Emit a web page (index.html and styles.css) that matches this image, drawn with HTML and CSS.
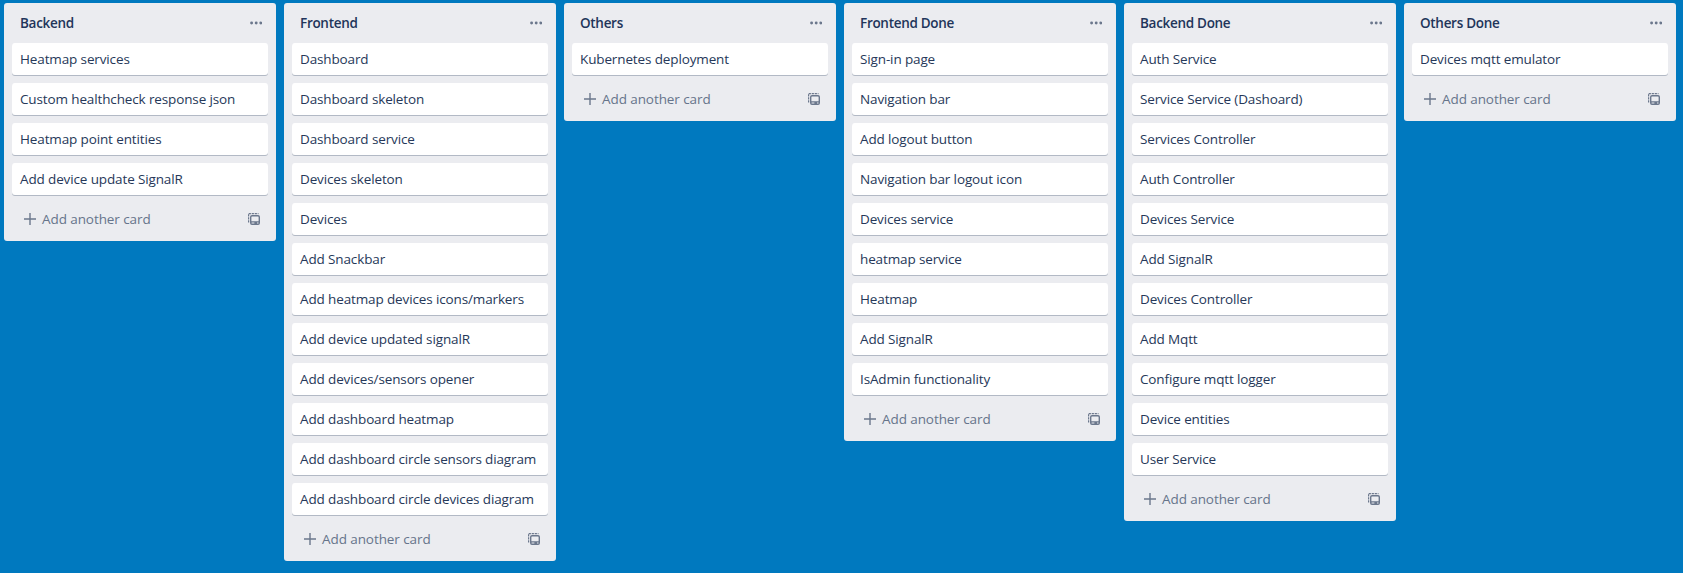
FILE: index.html
```
<!DOCTYPE html>
<html lang="en">
<head>
<meta charset="utf-8">
<title>Board</title>
<link rel="stylesheet" href="styles.css">
</head>
<body>
<svg width="0" height="0" class="defs">
  <symbol id="dots" viewBox="0 0 12 4"><circle cx="1.6" cy="2" r="1.45"/><circle cx="6.2" cy="2" r="1.45"/><circle cx="10.8" cy="2" r="1.45"/></symbol>
  <symbol id="plus" viewBox="0 0 12 12"><path d="M5.3 0h1.4v5.3H12v1.4H6.7V12H5.3V6.7H0V5.3h5.3z"/></symbol>
  <symbol id="template" viewBox="0 0 12 12"><path d="M.6 9.500V.6H10.500" fill="none" stroke="currentColor" stroke-width="1.2" stroke-dasharray="2.200 .8"/><path fill-rule="evenodd" d="M4 2h6a2 2 0 0 1 2 2v6a2 2 0 0 1-2 2H4a2 2 0 0 1-2-2V4a2 2 0 0 1 2-2zM4 3.400a.6.6 0 0 0-.6.6v4.200h7.200V4a.6.600 0 0 0-.6-.6zM3.600 9.600v1h2.800v-1zm5.400 0v1h1.500v-1z"/></symbol>
</svg>
<main class="board">
  <section class="list">
    <header class="list-header"><h2>Backend</h2><svg class="dots"><use href="#dots"/></svg></header>
    <div class="cards">
      <div class="card">Heatmap services</div>
      <div class="card">Custom healthcheck response json</div>
      <div class="card">Heatmap point entities</div>
      <div class="card">Add device update SignalR</div>
    </div>
    <footer class="composer"><svg class="icon"><use href="#plus"/></svg><span>Add another card</span><svg class="icon template"><use href="#template"/></svg></footer>
  </section>
  <section class="list">
    <header class="list-header"><h2>Frontend</h2><svg class="dots"><use href="#dots"/></svg></header>
    <div class="cards">
      <div class="card">Dashboard</div>
      <div class="card">Dashboard skeleton</div>
      <div class="card">Dashboard service</div>
      <div class="card">Devices skeleton</div>
      <div class="card">Devices</div>
      <div class="card">Add Snackbar</div>
      <div class="card">Add heatmap devices icons/markers</div>
      <div class="card">Add device updated signalR</div>
      <div class="card">Add devices/sensors opener</div>
      <div class="card">Add dashboard heatmap</div>
      <div class="card">Add dashboard circle sensors diagram</div>
      <div class="card">Add dashboard circle devices diagram</div>
    </div>
    <footer class="composer"><svg class="icon"><use href="#plus"/></svg><span>Add another card</span><svg class="icon template"><use href="#template"/></svg></footer>
  </section>
  <section class="list">
    <header class="list-header"><h2>Others</h2><svg class="dots"><use href="#dots"/></svg></header>
    <div class="cards">
      <div class="card">Kubernetes deployment</div>
    </div>
    <footer class="composer"><svg class="icon"><use href="#plus"/></svg><span>Add another card</span><svg class="icon template"><use href="#template"/></svg></footer>
  </section>
  <section class="list">
    <header class="list-header"><h2>Frontend Done</h2><svg class="dots"><use href="#dots"/></svg></header>
    <div class="cards">
      <div class="card">Sign-in page</div>
      <div class="card">Navigation bar</div>
      <div class="card">Add logout button</div>
      <div class="card">Navigation bar logout icon</div>
      <div class="card">Devices service</div>
      <div class="card">heatmap service</div>
      <div class="card">Heatmap</div>
      <div class="card">Add SignalR</div>
      <div class="card">IsAdmin functionality</div>
    </div>
    <footer class="composer"><svg class="icon"><use href="#plus"/></svg><span>Add another card</span><svg class="icon template"><use href="#template"/></svg></footer>
  </section>
  <section class="list">
    <header class="list-header"><h2>Backend Done</h2><svg class="dots"><use href="#dots"/></svg></header>
    <div class="cards">
      <div class="card">Auth Service</div>
      <div class="card">Service Service (Dashoard)</div>
      <div class="card">Services Controller</div>
      <div class="card">Auth Controller</div>
      <div class="card">Devices Service</div>
      <div class="card">Add SignalR</div>
      <div class="card">Devices Controller</div>
      <div class="card">Add Mqtt</div>
      <div class="card">Configure mqtt logger</div>
      <div class="card">Device entities</div>
      <div class="card">User Service</div>
    </div>
    <footer class="composer"><svg class="icon"><use href="#plus"/></svg><span>Add another card</span><svg class="icon template"><use href="#template"/></svg></footer>
  </section>
  <section class="list">
    <header class="list-header"><h2>Others Done</h2><svg class="dots"><use href="#dots"/></svg></header>
    <div class="cards">
      <div class="card">Devices mqtt emulator</div>
    </div>
    <footer class="composer"><svg class="icon"><use href="#plus"/></svg><span>Add another card</span><svg class="icon template"><use href="#template"/></svg></footer>
  </section>
</main>
</body>
</html>
```
FILE: styles.css
```
* { box-sizing: border-box; }
html, body { margin: 0; height: 100%; }
body {
  background: #0079bf;
  color: #172b4d;
  font: 13.5px/20px "Open Sans", "Noto Sans", sans-serif;
  letter-spacing: -0.13px;
  overflow: hidden;
}
.defs { display: none; }
.board { display: flex; align-items: flex-start; gap: 8px; padding: 3px 4px; }
.list { flex: 0 0 272px; width: 272px; min-width: 0; background: #ebecf0; border-radius: 3px; padding: 0 8px; }
.list-header { display: flex; align-items: center; justify-content: space-between; height: 40px; padding: 0 6px 0 8px; }
.list-header h2 { margin: 0; color: #22355a; font-size: 13.5px; font-weight: 600; line-height: 20px; letter-spacing: -0.3px; }
.dots { width: 12px; height: 4px; fill: #6b778c; }
.cards { display: flex; flex-direction: column; gap: 8px; }
.card { height: 32px; padding: 6px 0 6px 8px; color: #263859; background: #fff; border-radius: 3px; box-shadow: 0 1px 0 rgba(9, 30, 66, .25); white-space: nowrap; }
.composer { display: flex; align-items: center; height: 46px; padding: 2px 8px 0 12px; color: #66748b; }
.composer span { margin-left: 6px; letter-spacing: -0.08px; }
.icon { width: 12px; height: 12px; fill: #6b778c; color: #6b778c; }
.template { margin-left: auto; }
```
